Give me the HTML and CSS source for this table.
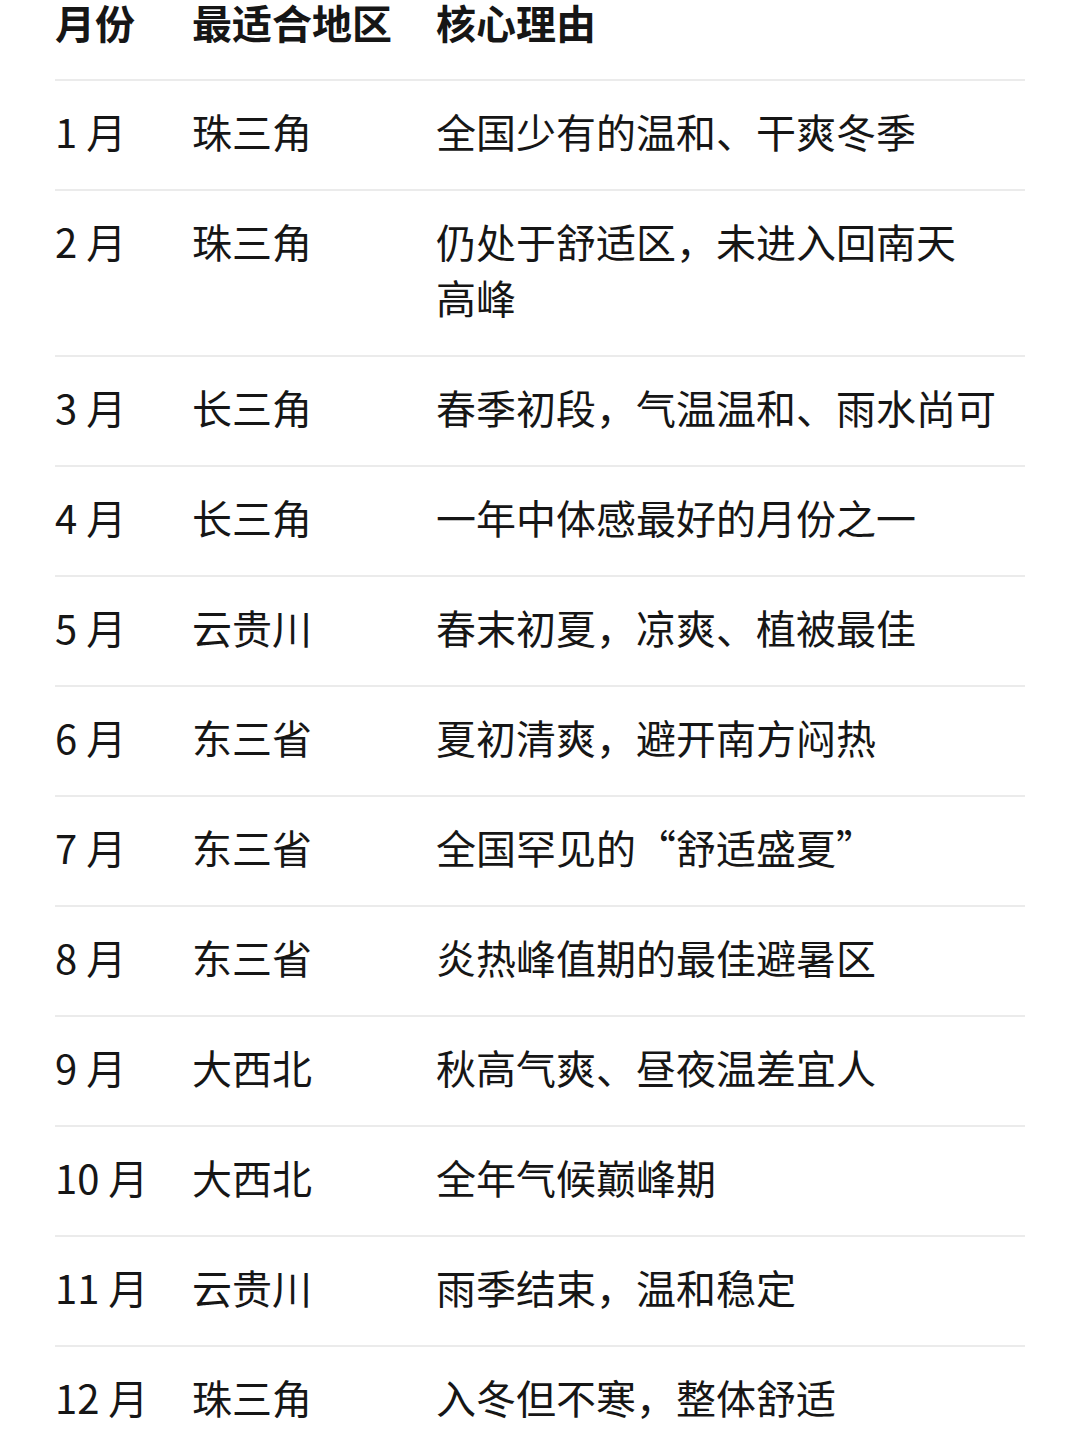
FILE: index.html
```html
<!DOCTYPE html>
<html lang="zh-CN">
<head>
<meta charset="utf-8">
<link rel="stylesheet" href="styles.css">
</head>
<body>
<div class="table">
  <div class="row head"><div>月份</div><div>最适合地区</div><div>核心理由</div></div>
  <div class="row"><div>1 月</div><div>珠三角</div><div>全国少有的温和、干爽冬季</div></div>
  <div class="row"><div>2 月</div><div>珠三角</div><div>仍处于舒适区，未进入回南天<span class="word">高峰</span></div></div>
  <div class="row"><div>3 月</div><div>长三角</div><div>春季初段，气温温和、雨水尚可</div></div>
  <div class="row"><div>4 月</div><div>长三角</div><div>一年中体感最好的月份之一</div></div>
  <div class="row"><div>5 月</div><div>云贵川</div><div>春末初夏，凉爽、植被最佳</div></div>
  <div class="row"><div>6 月</div><div>东三省</div><div>夏初清爽，避开南方闷热</div></div>
  <div class="row"><div>7 月</div><div>东三省</div><div>全国罕见的“舒适盛夏”</div></div>
  <div class="row"><div>8 月</div><div>东三省</div><div>炎热峰值期的最佳避暑区</div></div>
  <div class="row"><div>9 月</div><div>大西北</div><div>秋高气爽、昼夜温差宜人</div></div>
  <div class="row"><div>10 月</div><div>大西北</div><div>全年气候巅峰期</div></div>
  <div class="row"><div>11 月</div><div>云贵川</div><div>雨季结束，温和稳定</div></div>
  <div class="row"><div>12 月</div><div>珠三角</div><div>入冬但不寒，整体舒适</div></div>
</div>
</body>
</html>
```
FILE: styles.css
```css
html, body {
  margin: 0;
  padding: 0;
  background: #ffffff;
}
body {
  font-family: "Noto Sans CJK SC", "Noto Sans", sans-serif;
  color: #161616;
  font-size: 40px;
  line-height: 56px;
}
.table {
  margin: 0 55px;
}
.row {
  display: grid;
  grid-template-columns: 137px 244px 1fr;
  padding: 22px 0 30px;
  border-bottom: 2px solid #ebebeb;
}
.row.head {
  padding: 0 0 35px;
  line-height: 44px;
  font-weight: 600;
}
.word {
  white-space: nowrap;
}
```
